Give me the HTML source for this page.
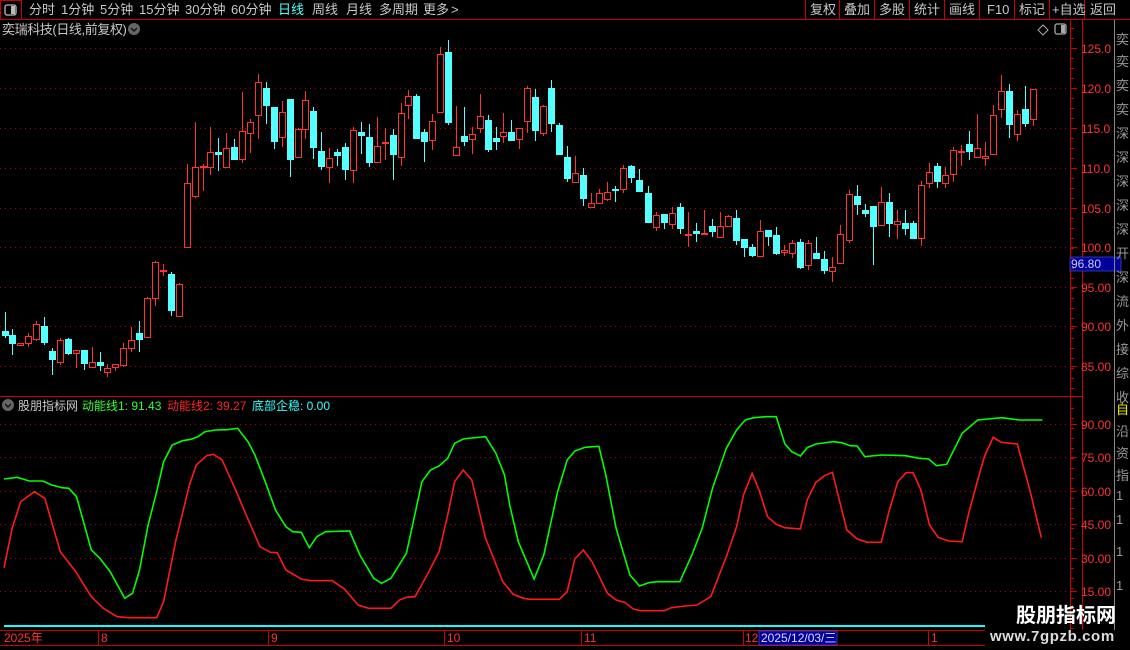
<!DOCTYPE html>
<html><head><meta charset="utf-8">
<style>
html,body{margin:0;padding:0;background:#000;width:1130px;height:650px;overflow:hidden}
body{position:relative;font-family:"Liberation Sans","Noto Sans CJK SC",sans-serif;color:#c8c8c8}
svg{position:absolute;left:0;top:0}
</style></head><body>
<svg id="s" width="1130" height="650" xmlns="http://www.w3.org/2000/svg" font-family="Liberation Sans, Noto Sans CJK SC, sans-serif">
<rect x="0.5" y="0.5" width="21" height="19" fill="none" stroke="#c00" />
<rect x="5" y="5" width="11" height="10" rx="2" fill="none" stroke="#bbb" stroke-width="1.3"/>
<rect x="11" y="6" width="4" height="8" fill="#bbb"/>
<line x1="0" y1="19.5" x2="1130" y2="19.5" stroke="#c00"/>
<g stroke="#c00"><line x1="805.5" y1="0" x2="805.5" y2="19"/><line x1="839.5" y1="0" x2="839.5" y2="19"/><line x1="874.5" y1="0" x2="874.5" y2="19"/><line x1="909.5" y1="0" x2="909.5" y2="19"/><line x1="944.5" y1="0" x2="944.5" y2="19"/><line x1="979.5" y1="0" x2="979.5" y2="19"/><line x1="1014.5" y1="0" x2="1014.5" y2="19"/><line x1="1049.5" y1="0" x2="1049.5" y2="19"/><line x1="1084.5" y1="0" x2="1084.5" y2="19"/></g>
<g font-size="13" fill="#c8c8c8">
<text x="29" y="14">分时</text><text x="61" y="14">1分钟</text><text x="100" y="14">5分钟</text><text x="139" y="14">15分钟</text><text x="185" y="14">30分钟</text><text x="231" y="14">60分钟</text><text x="278" y="14" fill="#54ffff">日线</text><text x="312" y="14">周线</text><text x="346" y="14">月线</text><text x="379" y="14">多周期</text><text x="423" y="14">更多</text><text x="451" y="14">&gt;</text>
<text x="810" y="14">复权</text><text x="844" y="14">叠加</text><text x="879" y="14">多股</text><text x="914" y="14">统计</text><text x="949" y="14">画线</text><text x="987" y="14">F10</text><text x="1019" y="14">标记</text><text x="1052" y="14">+自选</text><text x="1090" y="14">返回</text>
<text x="2" y="34" letter-spacing="-0.4">奕瑞科技(日线,前复权)</text>
</g>
<circle cx="134" cy="29" r="6" fill="#666"/><path d="M131 28 L134 31 L137 28" stroke="#111" stroke-width="1.4" fill="none"/>
<path d="M1043 25 L1048 30 L1043 35 L1038 30 Z" fill="none" stroke="#aaa"/>
<rect x="1055" y="24" width="11" height="10" rx="2" fill="none" stroke="#aaa" stroke-width="1.3"/><rect x="1061" y="25" width="4" height="8" fill="#aaa"/>
<line x1="1070.5" y1="20" x2="1070.5" y2="630" stroke="#c00"/>
<line x1="0" y1="396.5" x2="1083" y2="396.5" stroke="#c00"/>
<line x1="1082.5" y1="20" x2="1082.5" y2="630" stroke="#c00"/>
<line x1="0" y1="630.5" x2="985" y2="630.5" stroke="#c00"/>
<rect x="1070" y="257" width="51" height="14" fill="#00009c" stroke="#66f" stroke-width="0.5"/>
<text x="1071" y="268" font-size="12" fill="#c8c8ff">96.80</text>
<g id="grid" stroke="#a00" stroke-dasharray="1,4"></g>
<g id="ax" font-size="12" fill="#ff3232"></g>
<g id="candles"></g>
<circle cx="8" cy="405" r="6" fill="#666"/><path d="M5 404 L8 407 L11 404" stroke="#111" stroke-width="1.4" fill="none"/>
<g font-size="12"><text x="18" y="410" fill="#c8c8c8">股朋指标网</text><text x="82" y="410" fill="#3f3">动能线1: 91.43</text><text x="167" y="410" fill="#f22">动能线2: 39.27</text><text x="252" y="410" fill="#3ff">底部企稳: 0.00</text></g>
<polyline id="g1" fill="none" stroke="#00ff00" stroke-width="1.6"/>
<polyline id="r1" fill="none" stroke="#ff1a1a" stroke-width="1.6"/>
<line x1="4" y1="626" x2="985" y2="626" stroke="#1ff" stroke-width="2"/>
<g font-size="12" fill="#ff3232"><text x="4" y="642">2025年</text><text x="101" y="642">8</text><text x="271" y="642">9</text><text x="447" y="642">10</text><text x="584" y="642">11</text><text x="745" y="642">12</text><text x="931" y="642">1</text></g>
<g stroke="#c00"><line x1="98.5" y1="630" x2="98.5" y2="645"/><line x1="268.5" y1="630" x2="268.5" y2="645"/><line x1="444.5" y1="630" x2="444.5" y2="645"/><line x1="581.5" y1="630" x2="581.5" y2="645"/><line x1="743.5" y1="630" x2="743.5" y2="645"/><line x1="928.5" y1="630" x2="928.5" y2="645"/><line x1="0" y1="645.5" x2="985" y2="645.5"/></g>
<rect x="759" y="631" width="78" height="14" fill="#00009c" stroke="#55f" stroke-width="0.6"/>
<text x="761" y="642" font-size="12" fill="#ddf">2025/12/03/三</text>
<g font-size="13" fill="#999"><text x="1116" y="44">奕</text><text x="1116" y="66">奕</text><text x="1116" y="90">奕</text><text x="1116" y="114">奕</text><text x="1116" y="138">深</text><text x="1116" y="162">深</text><text x="1116" y="186">深</text><text x="1116" y="210">深</text><text x="1116" y="234">深</text><text x="1116" y="258">开</text><text x="1116" y="282">深</text><text x="1116" y="306">流</text><text x="1116" y="330">外</text><text x="1116" y="354">接</text><text x="1116" y="378">综</text><text x="1116" y="402">收</text><text x="1116" y="414" fill="#ee0">自</text><text x="1116" y="436">沿</text><text x="1116" y="458">资</text><text x="1116" y="480">指</text><text x="1116" y="500">1</text><text x="1116" y="524">1</text><text x="1116" y="556">1</text><text x="1116" y="590">1</text></g>
<g stroke="#888"><line x1="1114.5" y1="20" x2="1114.5" y2="630"/></g>
<text x="1016" y="622" font-size="20" font-weight="bold" fill="#fff">股朋指标网</text>
<text x="990" y="641" font-size="15" font-weight="bold" fill="#ddd" letter-spacing="0.6">www.7gpzb.com</text>
</svg>
<script>
var NS="http://www.w3.org/2000/svg";
function el(p,t,a){var e=document.createElementNS(NS,t);for(var k in a)e.setAttribute(k,a[k]);document.getElementById(p).appendChild(e);return e;}
[48,88,128,168,208,247,287,326,366,424,457,491,524,558,591].forEach(function(y){el('grid','line',{x1:0,y1:y+0.5,x2:1066,y2:y+0.5});});
var pl=[["125.0",48],["120.0",88],["115.0",128],["110.0",168],["105.0",208],["100.0",247],["95.00",287],["90.00",326],["85.00",366],["90.00",424],["75.00",457],["60.00",491],["45.00",524],["30.00",558],["15.00",591]];
pl.forEach(function(p){el('grid','line',{x1:1071,y1:p[1]+0.5,x2:1077,y2:p[1]+0.5,"stroke-dasharray":"none",stroke:"#c00"});var t=el('ax','text',{x:1081,y:p[1]+5});t.textContent=p[0];});
for(var y=28;y<630;y+=10){if(y>392&&y<400)continue;el('grid','line',{x1:1071,y1:y+0.5,x2:1074,y2:y+0.5,"stroke-dasharray":"none",stroke:"#c00"});}
var C=[
"c331,335,312,338","c335,343,329,355","r343,345,343,346","r336,343,333,347","r324,339,321,341","c326,342,317,345","c351,359,348,375","r340,362,338,365","c339,353,338,355","r350,353,350,368","c350,363,350,370","r362,367,347,367","c362,365,352,371","r368,372,364,377","r364,367,364,371","r348,365,343,367","r340,348,327,352","c333,339,321,352","r298,337,297,338","r262,298,261,306","r270,271,264,276","c274,310,272,316","r284,316,283,316","r183,247,164,247","r167,196,122,198","r166,167,164,191","r152,167,127,175","c152,154,138,171","r148,167,133,168","c147,159,139,159","r131,159,92,163","r122,133,119,153","r82,115,74,139","c88,105,82,124","c107,141,107,149","r112,137,101,147","c99,159,99,177","r129,157,128,157","r100,129,91,139","c111,147,107,159","c151,166,132,170","r158,167,148,183","c152,155,149,166","c147,169,143,180","r130,170,127,183","c132,135,122,154","c137,162,124,167","r146,162,117,162","r142,143,128,160","c135,154,129,180","r113,157,103,166","r96,105,90,119","c96,138,94,138","c132,141,129,162","r121,140,114,150","r54,112,47,112","c52,122,40,125","r147,155,106,155","c136,141,107,146","r134,139,127,154","r116,128,94,133","c120,149,115,152","c138,141,127,150","r132,136,113,143","c132,140,120,140","r128,139,128,149","r88,121,86,133","c97,130,89,141",
"r106,133,105,136","c88,123,80,132","c125,154,123,155","c157,178,146,182","r173,182,156,182","c175,198,168,206","r203,207,193,207","r193,203,189,204","r192,199,182,201","c189,190,186,202","r168,189,165,193","c166,177,165,183","c180,191,169,191","c193,222,186,222","r215,227,212,231","c214,222,214,229","r213,224,207,229","c207,228,203,234","r234,235,212,247","c231,233,223,242","r233,234,210,234","c226,231,219,237","r226,237,212,237","r216,226,215,227","c218,240,210,245","c239,247,239,257","c247,255,244,257","r231,256,220,256","c230,236,230,246","c235,253,227,255","r250,252,245,256","r243,253,240,258","c242,267,239,269","r243,265,240,270","c253,258,237,258","c259,270,251,274","r267,271,257,282","r234,263,225,263","r194,240,190,243","c196,204,185,215","c210,213,204,217","c206,226,206,265","r202,225,187,225","c202,223,193,237","r221,224,210,239","c223,228,210,235","c223,238,221,239","r185,238,181,246","r172,183,163,188","c166,181,163,188","r175,183,167,188","r150,174,147,182","r151,152,145,166","c144,151,131,160","r148,157,114,157","r156,158,142,166","r115,154,105,154","r91,109,75,118","c91,124,84,138","r114,134,110,141","c109,123,86,127","r89,119,89,126"];
C.forEach(function(s,i){
 var red=s[0]=="r",v=s.slice(1).split(",").map(Number);
 var x=i<=68?4.5+i*7.92:543+(i-68)*8.04;x=Math.round(x)+0.5;
 var col=red?"#ff3232":"#54ffff";
 el('candles','line',{x1:x,y1:v[2],x2:x,y2:v[3],stroke:col});
 var h=Math.max(v[1]-v[0],1);
 if(red)el('candles','rect',{x:x-3,y:v[0]+0.5,width:6,height:h,fill:"#000",stroke:col});
 else el('candles','rect',{x:x-3.5,y:v[0],width:7,height:h+1,fill:col});
});
function pts(a,off){var o=[];for(var i=0;i<a.length;i+=2)o.push((off+a[i]*0.3444).toFixed(1)+","+(405+a[i+1]/3).toFixed(1));return o;}
var g8=[12,222,50,217,85,228,125,228,150,240,180,248,200,250,222,275,265,435,290,460,320,500,362,580,385,565,405,495,430,360,455,260,475,170,500,120,530,107,555,103,575,95,595,80,625,75,660,74,690,70,720,110,740,150,770,230,800,315,830,365,850,380,875,382,898,428,920,395,945,380,1015,378,1045,450,1085,520,1108,535,1135,520,1180,445,1200,350,1225,230,1250,195,1275,183,1300,160,1320,115,1345,102,1370,99,1410,95,1440,145,1465,210,1480,300,1505,410,1550,520];
var g9=[12,522,40,450,80,260,108,165,130,138,160,127,200,124,220,210,250,370,290,510,318,543,345,533,370,530,435,530,470,450,500,370,530,250,570,130,600,75,625,45,650,38,685,35,715,35,740,117,760,140,785,153,805,128,830,117,880,110,905,113,930,122,950,123,972,155,1020,150,1090,152,1130,160,1158,162,1180,182,1210,178,1255,85,1300,45,1370,38,1420,45,1488,45];
var r8=[12,488,35,370,60,290,100,260,130,280,175,440,220,500,265,575,300,610,340,635,375,638,455,638,475,590,510,410,550,240,570,180,600,152,620,148,645,165,680,245,715,330,755,425,785,442,805,443,830,495,875,522,900,527,965,527,1000,552,1040,600,1070,610,1135,610,1160,585,1180,577,1205,575,1240,510,1275,440,1300,330,1320,230,1345,195,1370,225,1410,400,1460,530,1490,568,1520,580];
var r9=[0,583,85,583,108,560,130,462,155,435,180,470,225,565,250,585,275,592,300,612,320,617,390,617,410,608,450,603,485,600,525,575,570,455,600,365,620,270,645,205,665,255,690,335,715,358,740,368,785,372,805,285,830,232,855,212,878,202,920,375,950,402,980,412,1020,412,1042,320,1068,230,1092,203,1112,203,1135,255,1160,360,1185,397,1215,408,1255,410,1275,320,1300,225,1320,153,1345,97,1368,112,1415,117,1450,250,1485,398];
document.getElementById('g1').setAttribute('points',pts(g8,0).concat(pts(g9,530)).join(' '));
document.getElementById('r1').setAttribute('points',pts(r8,0).concat(pts(r9,530)).join(' '));
</script>
</body></html>
